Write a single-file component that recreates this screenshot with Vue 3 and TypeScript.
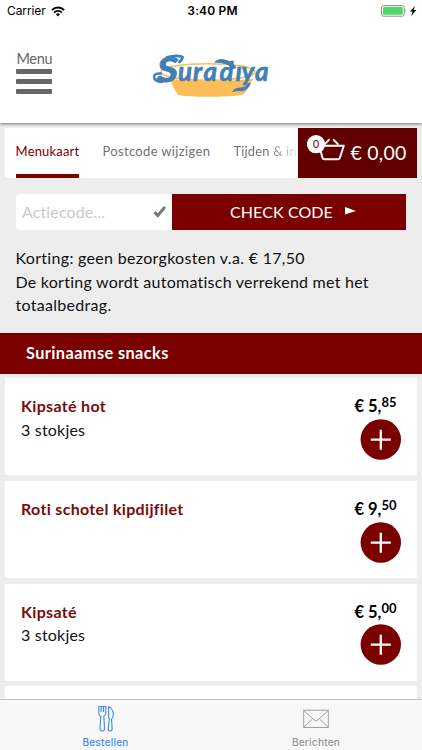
<script setup lang="ts">
interface Dish {
  name: string
  note: string
  euros: string
  cents: string
}

const tabs: string[] = ['Menukaart', 'Postcode wijzigen', 'Tijden & in']
const dishes: Dish[] = [
  { name: 'Kipsaté hot', note: '3 stokjes', euros: '5', cents: '85' },
  { name: 'Roti schotel kipdijfilet', note: '', euros: '9', cents: '50' },
  { name: 'Kipsaté', note: '3 stokjes', euros: '5', cents: '00' },
]
</script>

<template>
  <div class="screen">
    <header class="header">
      <div class="status">
        <div class="carrier">
          <span>Carrier</span>
          <svg class="wifi" viewBox="0 0 14 11" width="14" height="11">
            <path d="M.9 4.1a8.7 8.7 0 0 1 12.2 0" fill="none" stroke="#000" stroke-width="2" />
            <path d="M3.1 6.5a5.6 5.6 0 0 1 7.8 0" fill="none" stroke="#000" stroke-width="1.8" />
            <path d="M4.9 8.3a3 3 0 0 1 4.2 0L7 10.5z" />
          </svg>
        </div>
        <span class="clock">3:40 PM</span>
        <svg class="battery" viewBox="0 0 37 12" width="37" height="12">
          <rect x="1.5" y=".6" width="22.8" height="10.6" rx="2" fill="#fff" stroke="#8c8c8c" />
          <rect x="3" y="2.1" width="19.8" height="7.6" rx="1" fill="#4cd964" />
          <path d="M25.6 4q1.7 1.9 0 3.8z" fill="#8c8c8c" />
          <path d="M34.9 1 30 6.6h2.5L31.2 11l5.1-6h-2.6z" />
        </svg>
      </div>
      <div class="brand">
        <div class="menu">
          <span class="menu-label">Menu</span>
          <i></i><i></i><i></i>
        </div>
        <svg class="logo" viewBox="0 0 140 60" width="140" height="60">
          <ellipse cx="68" cy="27" rx="47" ry="8.3" fill="none" stroke="#fbc05a" stroke-width="1.6" />
          <path d="M30 34Q69 38 113 34Q108 44 104 49Q100 51.5 70 51.8Q47 51.8 38 50Q33 43 30 34z" fill="#fdbe57" />
          <g class="lettering">
            <text x="17" y="36.6" font-size="34" textLength="21" lengthAdjust="spacingAndGlyphs" class="initial">S</text>
            <text x="38 53 63.5 79.5 95.5 101.5 115" y="36" font-size="26">uradıya</text>
          </g>
          <g fill="none" stroke="#427fb5" stroke-linecap="round" stroke-linejoin="round">
            <path d="M27 12.4Q36 9.6 42.5 12Q42.5 14.500 39.500 16.800" stroke-width="2.8" />
            <path d="M21 28.500Q14 28 14 32Q14.500 36.600 22 37" stroke-width="2.400" />
          </g>
          <path d="M74 17.500Q79 11.500 88 15.500Q94 18 96.500 23L93 24Q88 17.500 74 17.500z" fill="#427fb5" />
          <path d="M92 47Q94.500 42.500 101 42.600Q106 42 108 38L111 38Q108 45.500 102 46.200Q97 45.800 92 47z" fill="#427fb5" />
        </svg>
      </div>
    </header>

    <main class="content">
      <nav class="tabs">
        <span v-for="(tab, i) in tabs" :key="tab" class="tab" :class="['tab-' + i, { active: i === 0 }]">{{ tab }}</span>
        <div class="cart">
          <svg viewBox="0 0 40 30" width="40" height="30">
            <path d="M14 10.800H36.800L32.800 23Q32.400 24.200 31 24.200H17.400Q16 24.200 15.600 23L12.500 12" fill="none" stroke="#fff" stroke-width="2" stroke-linejoin="round" />
            <path d="m17.800 9 4.100-4.200M30.800 9l-4.100-4.200" stroke="#fff" stroke-width="1.900" stroke-linecap="round" />
            <circle cx="9" cy="9.200" r="9.100" fill="#fff" />
            <text x="9" y="12.700" text-anchor="middle" class="count">0</text>
          </svg>
          <span class="total">€ 0,00</span>
        </div>
      </nav>

      <div class="coupon">
        <div class="field">
          <span class="placeholder">Actiecode...</span>
          <svg viewBox="0 0 14 13" width="14" height="13"><path d="m1.500 7.100 3.400 3.400L12 1.800" fill="none" stroke="#777" stroke-width="2.900" /></svg>
        </div>
        <div class="check">
          <span>CHECK CODE</span>
          <svg viewBox="0 0 11 8" width="11" height="8"><path d="M0 0 11 4 0 7.500z" fill="#fff" /></svg>
        </div>
      </div>

      <div class="discount">
        <div class="line-1">Korting: geen bezorgkosten v.a. € 17,50</div>
        <div class="line-2">De korting wordt automatisch verrekend met het</div>
        <div class="line-3">totaalbedrag.</div>
      </div>

      <h2 class="category">Surinaamse snacks</h2>

      <div class="dishes">
        <article v-for="dish in dishes" :key="dish.name" class="dish">
          <div class="info">
            <h3>{{ dish.name }}</h3>
            <p>{{ dish.note }}</p>
          </div>
          <div class="buy">
            <div class="price"><span>€ {{ dish.euros }},</span><span class="cents">{{ dish.cents }}</span></div>
            <svg class="add" viewBox="0 0 41 41" width="41" height="41">
              <circle cx="20.8" cy="20.5" r="20.2" fill="#7a0000" />
              <path d="M20.800 10.700v20M10.800 20.700h20" stroke="#fff" stroke-width="2.300" />
            </svg>
          </div>
        </article>
        <article class="dish"></article>
      </div>
    </main>

    <footer class="tabbar">
      <div class="item selected">
        <svg viewBox="0 0 18 28" width="18" height="28" fill="none" stroke="#3b8ff0" stroke-width="1.15" stroke-linejoin="round">
          <path d="M1.800 1.500H8.800V8Q8.800 10.500 6.800 11.300L7.600 23.800Q7.500 26 5.300 26Q3.100 26 3 23.800L3.800 11.300Q1.800 10.500 1.800 8z" />
          <path d="M4.100 1.500V7M6.500 1.500V7" />
          <path d="M11.600 1.500Q15 2.500 16.300 8.500Q16.500 12 14.500 14.500L15.200 23.800Q15.200 26 13.200 26Q11.200 26 11.200 23.800L12.300 14L11.600 12z" />
        </svg>
        <span>Bestellen</span>
      </div>
      <div class="item messages">
        <svg viewBox="0 0 26 28" width="26" height="28" fill="none" stroke="#a0a0a0" stroke-width="1">
          <rect x=".7" y="5.200" width="24.600" height="17.300" />
          <path d="m.9 5.500 10.200 9.500q1.900 1.800 3.800 0L25.100 5.500M.9 22.200l8.300-7.900M25.100 22.200l-8.300-7.900" />
        </svg>
        <span>Berichten</span>
      </div>
    </footer>
  </div>
</template>

<style>
body {
  margin: 0;
  overflow: hidden;
}
</style>

<style scoped>
* {
  box-sizing: border-box;
}
.screen {
  width: 422px;
  height: 750px;
  display: flex;
  flex-direction: column;
  overflow: hidden;
  background: #ededed;
  color: #111;
  font-family: Lato, sans-serif;
  font-variant-ligatures: none;
  white-space: nowrap;
}
svg {
  display: block;
  flex: none;
}
.header {
  height: 122.5px;
  flex: none;
  background: #fff;
  box-shadow: 0 1px 3px rgba(0, 0, 0, 0.5);
  z-index: 1;
}
.status {
  height: 22px;
  display: grid;
  grid-template-columns: 1fr auto 1fr;
  align-items: center;
  padding: 0 5px 0 7px;
  font: 12px/22px Inter, sans-serif;
  color: #000;
}
.carrier {
  display: flex;
  gap: 5.5px;
  align-items: center;
  letter-spacing: -0.1px;
}
.clock {
  padding-left: 1px;
  font-weight: 600;
  letter-spacing: 0.15px;
}
.battery {
  justify-self: end;
}
.brand {
  display: flex;
  padding: 23px 0 0 16.4px;
}
.menu {
  width: 123.6px;
  padding-top: 3px;
  color: #666;
}
.menu-label {
  display: block;
  font-size: 14.5px;
  line-height: 21px;
  letter-spacing: -0.3px;
}
.menu i {
  display: block;
  width: 35.8px;
  height: 5px;
  margin-bottom: 5.2px;
  border-radius: 1px;
  background: #666;
}
.lettering {
  font-family: Lato, sans-serif;
  font-style: italic;
  font-weight: 700;
  fill: #427fb5;
  stroke: #427fb5;
  stroke-width: 0.6px;
}
.initial {
  stroke-width: 1px;
}
.content {
  flex: 1;
  min-height: 0;
  overflow: hidden;
  padding-top: 5px;
}
.tabs {
  height: 50px;
  margin: 0 5px;
  padding-left: 10.6px;
  display: flex;
  background: #fff;
  color: #707070;
  font-size: 13px;
  line-height: 46px;
}
.tab {
  flex: none;
  margin-right: 23.5px;
}
.tab-0 {
  width: 63.4px;
  letter-spacing: 0.18px;
}
.tab-1 {
  width: 107.5px;
  letter-spacing: 0.34px;
}
.tab-2 {
  width: 64.5px;
  margin-right: 0;
  letter-spacing: 0.15px;
  color: transparent;
  background: linear-gradient(90deg, #707070 55%, #fff 105%);
  background-clip: text;
}
.active {
  color: #7a0000;
  border-bottom: 4.5px solid #7a0000;
}
.cart {
  flex: none;
  width: 118.7px;
  display: flex;
  padding: 7px 0 0 9.5px;
  background: #620000;
  color: #fff;
}
.count {
  font-family: Lato, sans-serif;
  font-size: 10.5px;
  fill: #620000;
}
.total {
  margin-left: 3px;
  font-size: 19.5px;
  line-height: 36px;
  letter-spacing: 0.25px;
}
.coupon {
  display: flex;
  height: 36.7px;
  margin: 16px 15.8px 0 15.5px;
}
.field {
  width: 156.5px;
  display: flex;
  align-items: center;
  justify-content: space-between;
  padding: 0 5px 0 6.5px;
  border-radius: 4px;
  background: #fff;
}
.placeholder {
  color: #c9c9c9;
  font-size: 16px;
  letter-spacing: 0.12px;
}
.check {
  flex: 1;
  display: flex;
  align-items: center;
  padding-left: 58px;
  gap: 12px;
  background: #7a0000;
  color: #fff;
  font-size: 16px;
  letter-spacing: 0.1px;
}
.check svg {
  margin-top: -1px;
}
.discount {
  margin: 15.9px 15.5px 0;
  font-size: 16px;
  line-height: 23.6px;
}
.line-1 {
  letter-spacing: 0.31px;
}
.line-2 {
  letter-spacing: 0.25px;
}
.line-3 {
  letter-spacing: 0.3px;
}
.category {
  height: 41px;
  margin: 15.8px 0 4.7px;
  padding-left: 26px;
  background: #7a0000;
  color: #fff;
  font-size: 16.3px;
  font-weight: 700;
  line-height: 40px;
  letter-spacing: 0.42px;
}
.dishes {
  display: grid;
  gap: 5.6px;
  margin: 0 5px;
}
.dish {
  display: flex;
  justify-content: space-between;
  height: 97px;
  padding: 16px 16px 0;
  background: #fff;
}
.info h3 {
  margin: 0;
  color: #7a0a0a;
  font-size: 16px;
  font-weight: 700;
  line-height: 23.5px;
  letter-spacing: 0.32px;
}
.info p {
  margin: 0;
  font-size: 16px;
  line-height: 23.5px;
  letter-spacing: 0.2px;
}
.buy {
  width: 48px;
  padding-top: 1px;
}
.price {
  display: flex;
  justify-content: flex-end;
  width: 43.5px;
  color: #000;
  font-size: 16.5px;
  font-weight: 700;
  line-height: 23.5px;
}
.cents {
  font-size: 13px;
  line-height: 14.5px;
}
.add {
  margin: 0.3px 0 0 7px;
}
.tabbar {
  height: 51px;
  flex: none;
  display: grid;
  grid-template-columns: 1fr 1fr;
  background: #f8f8f8;
  border-top: 1px solid #c4c4c4;
  color: #969696;
  font-family: Inter, sans-serif;
  font-size: 10px;
  font-weight: 500;
  z-index: 1;
}
.item {
  display: flex;
  flex-direction: column;
  align-items: center;
  padding-top: 5px;
  line-height: 12px;
}
.item span {
  margin-top: 3px;
  letter-spacing: 0.25px;
}
.messages {
  padding-right: 1px;
}
.selected {
  color: #3b8ff0;
}
</style>
